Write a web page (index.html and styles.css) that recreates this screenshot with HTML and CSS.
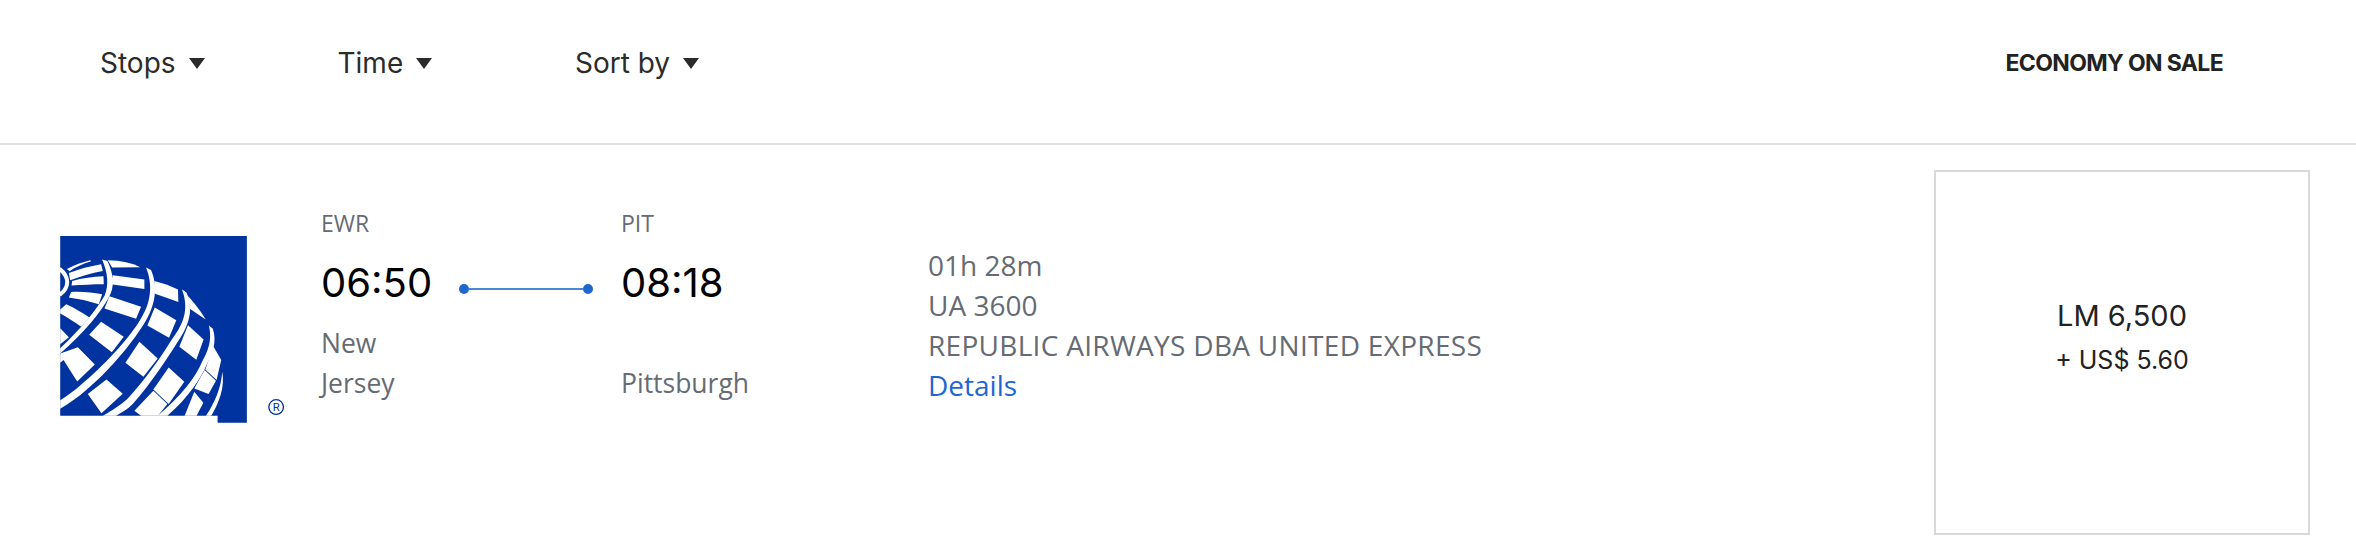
FILE: index.html
```html
<!DOCTYPE html>
<html lang="en">
<head>
<meta charset="utf-8">
<title>Flight results</title>
<link rel="stylesheet" href="styles.css">
</head>
<body>
<header class="toolbar">
  <nav class="filters">
    <button class="filter">Stops<span class="caret"></span></button>
    <button class="filter">Time<span class="caret"></span></button>
    <button class="filter">Sort by<span class="caret"></span></button>
  </nav>
  <div class="cabin">ECONOMY ON SALE</div>
</header>
<main class="row">
  <div class="logo-col">
    <svg class="logo" viewBox="62 47 678 562" aria-label="United logo">
      <path class="blue" d="M62 47H623V608H535V587H62Z"/>
      <g class="white">
        <path d="M82 146C105 134 128 126 152 120L155 123C130 131 107 141 90 153Z"/>
        <path d="M88 158C120 146 150 138 185 132L190 152C155 158 123 168 92 180Z"/>
        <path d="M98 182C128 174 160 169 192 168L193 192C160 192 128 194 96 196Z"/>
        <path d="M95 215C128 213 160 217 188 222L178 252C145 242 118 236 88 232Z"/>
        <path d="M80 252C106 264 130 278 150 292L125 320C106 306 84 292 62 280V268Z"/>
        <path d="M62 324L88 351L62 372Z"/>
        <path d="M205 120C246 121 276 128 303 141L218 142Z"/>
        <path d="M220 165L315 178V206L215 192Z"/>
        <path d="M210 228L305 260L290 296L195 265Z"/>
        <path d="M185 305L253 350L217 396L149 344Z"/>
        <path d="M115 381L166 433L113 484L72 420L62 428V400Z"/>
        <path d="M345 182C368 188 394 196 416 208L417 245L345 220Z"/>
        <path d="M346 262L411 300L389 353L324 316Z"/>
        <path d="M300 365L355 415L312 470L258 428Z"/>
        <path d="M201 478L250 521L186 580L145 522Z"/>
        <path d="M446 228C464 246 484 272 499 298L446 262Z"/>
        <path d="M446 315L493 358L471 419L420 380Z"/>
        <path d="M388 442L435 485L388 552L342 508Z"/>
        <path d="M342 512L384 552L356 587H305L285 572Z"/>
        <path d="M522 378L546 420L532 480L498 448Z"/>
        <path d="M496 450L530 482L508 522L465 505Z"/>
        <path d="M465 515L492 548L472 587H436Z"/>
        <path class="arc" d="M60 146C76 158 83 172 83 186C83 202 74 214 60 224"/>
        <path d="M188 118L204 122C224 165 226 200 208 232C184 276 134 338 62 400V384C124 326 172 268 196 225C208 196 206 160 188 118Z"/>
        <path d="M320 142L335 149C355 195 352 252 312 314C276 372 206 456 140 510C118 530 92 548 62 566V541C82 528 104 512 122 496C192 438 264 360 298 306C338 248 340 192 320 142Z"/>
        <path d="M428 208L441 216C464 264 452 314 412 370C384 414 338 486 280 552C264 568 246 578 230 587H190C220 570 246 552 262 538C320 476 368 406 396 360C438 306 448 262 428 208Z"/>
        <path d="M509 316L521 326C534 368 518 404 502 434C486 474 446 534 384 587H355C424 530 470 470 488 426C504 396 520 364 509 316Z"/>
        <path d="M549 455C558 500 538 552 516 587H500C526 550 546 502 549 455Z"/>
      </g>
      <circle class="reg-ring" cx="711" cy="561" r="22"/>
      <text class="reg-text" x="711" y="573" text-anchor="middle">R</text>
    </svg>
  </div>
  <section class="route">
    <div class="stop">
      <div class="code">EWR</div>
      <div class="clock">06:50</div>
      <div class="city">New<br>Jersey</div>
    </div>
    <div class="connector"><span class="dot"></span><span class="rule"></span><span class="dot"></span></div>
    <div class="stop stop-end">
      <div class="code">PIT</div>
      <div class="clock">08:18</div>
      <div class="city"><br>Pittsburgh</div>
    </div>
  </section>
  <section class="info">
    <div>01h 28m</div>
    <div>UA 3600</div>
    <div class="airline">REPUBLIC AIRWAYS DBA UNITED EXPRESS</div>
    <a class="details" href="#">Details</a>
  </section>
  <div class="price">
    <div class="miles">LM 6,500</div>
    <div class="fee">+ US$ 5.60</div>
  </div>
</main>
</body>
</html>
```
FILE: styles.css
```css
* { box-sizing: border-box; }
html, body { margin: 0; background: #fff; }
body { width: 2356px; height: 554px; overflow: hidden; font-family: "Open Sans", "Liberation Sans", sans-serif; }
.toolbar { height: 145px; border-bottom: 2px solid #e0e0e0; display: flex; justify-content: space-between; padding: 43px 133px 0 100px; }
.filters { display: flex; }
.filter { width: 237.5px; height: 40px; padding: 0; border: 0; background: none; display: flex; align-items: center; font: 400 28px/40px "Inter", sans-serif; color: #2b2b2b; }
.caret { margin-left: 13px; width: 0; height: 0; border-left: 8px solid transparent; border-right: 8px solid transparent; border-top: 11px solid #2b2b2b; }
.cabin { font: 700 23px/40px "Inter", sans-serif; letter-spacing: -0.65px; color: #222; }
.row { display: flex; height: 409px; padding: 25px 46px 19px 60px; }
.logo-col { width: 261px; padding-top: 66px; }
.logo { display: block; width: 226px; height: 187px; }
.blue { fill: #0033a0; }
.white path { fill: #fff; }
.white .arc { fill: none; stroke: #fff; stroke-width: 12; }
.reg-ring { fill: none; stroke: #0033a0; stroke-width: 4; }
.reg-text { font: 400 34px "Roboto", sans-serif; fill: #0033a0; }
.route { width: 607px; display: flex; padding-top: 33px; }
.stop { width: 138px; }
.stop-end { width: 180px; }
.code { font-size: 23px; line-height: 40px; color: #666b73; }
.clock { font: 400 40px/50px "Inter", sans-serif; margin-top: 15px; color: #000; }
.city { font-size: 26.5px; line-height: 40px; color: #666b73; margin-top: 15px; }
.connector { width: 162px; height: 12px; margin-top: 80px; display: flex; align-items: center; }
.dot { width: 10px; height: 10px; border-radius: 50%; background: #1f66d1; flex: none; }
.rule { width: 114px; height: 2px; background: #4a86d8; }
.info { flex: 1; padding-top: 75px; font-size: 28px; line-height: 40px; color: #666b73; }
.airline { letter-spacing: 0.3px; }
.details { color: #1f66d1; text-decoration: none; }
.price { width: 376px; height: 365px; border: 2px solid #d9d9d9; padding-bottom: 30px; display: flex; flex-direction: column; justify-content: center; align-items: center; color: #222; }
.miles { font: 400 29px/44px "Inter", sans-serif; }
.fee { font: 400 25px/44px "Inter", sans-serif; }
```
